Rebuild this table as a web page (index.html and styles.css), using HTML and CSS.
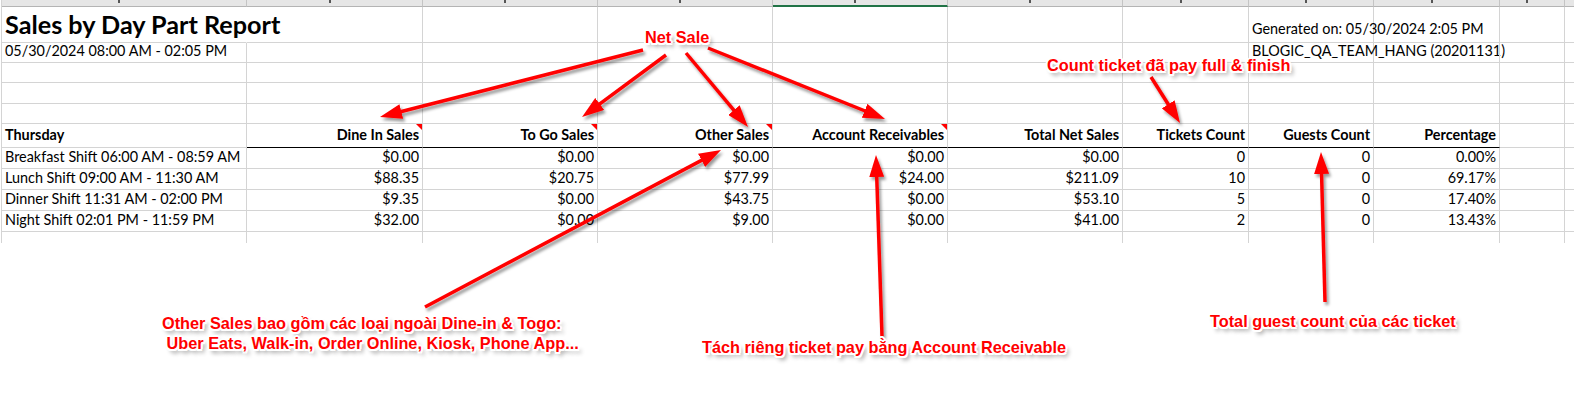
FILE: index.html
```html
<!DOCTYPE html>
<html lang="vi">
<head>
<meta charset="utf-8">
<title>Sales by Day Part Report</title>
<link rel="stylesheet" href="styles.css">
</head>
<body>
<div class="page">
  <div class="sheet">
    <div class="hd"></div>
    <div class="hd"></div>
    <div class="hd"></div>
    <div class="hd"></div>
    <div class="hd hd-sel"></div>
    <div class="hd"></div>
    <div class="hd"></div>
    <div class="hd"></div>
    <div class="hd"></div>
    <div class="hd"></div>
    <div class="hd hd-last"></div>

    <div class="c title no-r">Sales by Day Part Report</div>
    <div class="c"></div><div class="c"></div><div class="c"></div><div class="c"></div><div class="c"></div><div class="c"></div>
    <div class="c gen">Generated on: 05/30/2024 2:05 PM</div>
    <div class="c"></div><div class="c"></div><div class="c last"></div>

    <div class="c">05/30/2024 08:00 AM - 02:05 PM</div>
    <div class="c"></div><div class="c"></div><div class="c"></div><div class="c"></div><div class="c"></div><div class="c"></div>
    <div class="c">BLOGIC_QA_TEAM_HANG (20201131)</div>
    <div class="c"></div><div class="c"></div><div class="c last"></div>

    <div class="c"></div><div class="c"></div><div class="c"></div><div class="c"></div><div class="c"></div><div class="c"></div><div class="c"></div><div class="c"></div><div class="c"></div><div class="c"></div><div class="c last"></div>
    <div class="c"></div><div class="c"></div><div class="c"></div><div class="c"></div><div class="c"></div><div class="c"></div><div class="c"></div><div class="c"></div><div class="c"></div><div class="c"></div><div class="c last"></div>
    <div class="c"></div><div class="c"></div><div class="c"></div><div class="c"></div><div class="c"></div><div class="c"></div><div class="c"></div><div class="c"></div><div class="c"></div><div class="c"></div><div class="c last"></div>

    <div class="c th day">Thursday</div>
    <div class="c th r hb note-mark">Dine In Sales</div>
    <div class="c th r hb note-mark">To Go Sales</div>
    <div class="c th r hb note-mark">Other Sales</div>
    <div class="c th r hb note-mark">Account Receivables</div>
    <div class="c th r hb">Total Net Sales</div>
    <div class="c th r hb">Tickets Count</div>
    <div class="c th r hb">Guests Count</div>
    <div class="c th r hb">Percentage</div>
    <div class="c"></div><div class="c last"></div>

    <div class="c">Breakfast Shift 06:00 AM - 08:59 AM</div>
    <div class="c r">$0.00</div><div class="c r">$0.00</div><div class="c r">$0.00</div><div class="c r">$0.00</div><div class="c r">$0.00</div>
    <div class="c r">0</div><div class="c r">0</div><div class="c r">0.00%</div>
    <div class="c"></div><div class="c last"></div>

    <div class="c">Lunch Shift 09:00 AM - 11:30 AM</div>
    <div class="c r">$88.35</div><div class="c r">$20.75</div><div class="c r">$77.99</div><div class="c r">$24.00</div><div class="c r">$211.09</div>
    <div class="c r">10</div><div class="c r">0</div><div class="c r">69.17%</div>
    <div class="c"></div><div class="c last"></div>

    <div class="c">Dinner Shift 11:31 AM - 02:00 PM</div>
    <div class="c r">$9.35</div><div class="c r">$0.00</div><div class="c r">$43.75</div><div class="c r">$0.00</div><div class="c r">$53.10</div>
    <div class="c r">5</div><div class="c r">0</div><div class="c r">17.40%</div>
    <div class="c"></div><div class="c last"></div>

    <div class="c">Night Shift 02:01 PM - 11:59 PM</div>
    <div class="c r">$32.00</div><div class="c r">$0.00</div><div class="c r">$9.00</div><div class="c r">$0.00</div><div class="c r">$41.00</div>
    <div class="c r">2</div><div class="c r">0</div><div class="c r">13.43%</div>
    <div class="c"></div><div class="c last"></div>

    <div class="c end"></div><div class="c end"></div><div class="c end"></div><div class="c end"></div><div class="c end"></div><div class="c end"></div><div class="c end"></div><div class="c end"></div><div class="c end"></div><div class="c end"></div><div class="c end last"></div>
  </div>

  <svg class="overlay" width="1574" height="396" viewBox="0 0 1574 396" aria-hidden="true">
    <defs>
      <marker id="ah" markerUnits="userSpaceOnUse" markerWidth="22" markerHeight="15" refX="10" refY="7.5" orient="auto">
        <path d="M0,0 L22,7.5 L0,15 Z" fill="#ff0000"/>
      </marker>
      <filter id="sh" filterUnits="userSpaceOnUse" x="0" y="0" width="1574" height="396">
        <feDropShadow dx="2" dy="3" stdDeviation="1.5" flood-color="#000" flood-opacity="0.4"/>
      </filter>
    </defs>
    <g filter="url(#sh)" stroke="#ff0000" stroke-width="3.5" fill="none">
      <line x1="643" y1="50" x2="391.6" y2="114" marker-end="url(#ah)"/>
      <line x1="666" y1="55" x2="591.7" y2="109.9" marker-end="url(#ah)"/>
      <line x1="686" y1="53" x2="740.3" y2="117.8" marker-end="url(#ah)"/>
      <line x1="708" y1="48" x2="873.9" y2="114.5" marker-end="url(#ah)"/>
      <line x1="1151" y1="77" x2="1173.6" y2="112.8" marker-end="url(#ah)"/>
      <line x1="425" y1="307" x2="710.4" y2="155.6" marker-end="url(#ah)"/>
      <line x1="882" y1="336" x2="876.4" y2="167" marker-end="url(#ah)"/>
      <line x1="1325" y1="302" x2="1321.3" y2="164" marker-end="url(#ah)"/>
    </g>
  </svg>

  <div class="note note-net">Net Sale</div>
  <div class="note note-count">Count ticket đã pay full &amp; finish</div>
  <div class="note note-other">Other Sales bao gồm các loại ngoài Dine-in &amp; Togo:<br>&nbsp;Uber Eats, Walk-in, Order Online, Kiosk, Phone App...</div>
  <div class="note note-ar">Tách riêng ticket pay bằng Account Receivable</div>
  <div class="note note-guest">Total guest count của các ticket</div>
</div>
</body>
</html>
```

FILE: styles.css
```css
html, body {
  margin: 0;
  padding: 0;
  background: #ffffff;
}

.page {
  position: relative;
  width: 1574px;
  height: 396px;
  overflow: hidden;
  background: #ffffff;
}

.sheet {
  display: grid;
  margin-left: 1px;
  border-left: 1px solid #d4d4d4;
  grid-template-columns: 245px 176px 175px 175px 175px 175px 126px 125px 126px 65px 1fr;
  grid-template-rows: 7px 36px 20px 20px 21px 20px 24px 21px 21px 21px 21px 11px;
  font-family: Lato, "Noto Sans", sans-serif;
  font-size: 14.4px;
  color: #000;
}

.hd {
  position: relative;
  box-sizing: border-box;
  background: #e6e6e6;
  border-right: 1px solid #c4c4c4;
  border-bottom: 1px solid #b4b4b4;
}
.hd::after {
  content: "";
  position: absolute;
  top: 0;
  left: 50%;
  width: 2px;
  height: 3px;
  margin-left: -6px;
  background: #555;
}
.hd-sel {
  border-bottom: 2px solid #217346;
}
.hd-last {
  border-right: 0;
}
.hd-last::after {
  display: none;
}

.c {
  position: relative;
  box-sizing: border-box;
  border-right: 1px solid #d4d4d4;
  border-bottom: 1px solid #d4d4d4;
  display: flex;
  align-items: flex-end;
  padding: 0 3px 2px 3px;
  line-height: 18px;
  white-space: nowrap;
  min-width: 0;
}
.c.last { border-right: 0; }
.c.no-r { border-right-color: transparent; }
.c.end { border-bottom: 0; }
.c.r { justify-content: flex-end; }

.title {
  font-size: 25.2px;
  font-weight: 700;
  line-height: 30px;
  padding-bottom: 3px;
  padding-left: 3px;
  z-index: 1;
}
.gen {
  padding-bottom: 4px;
}

.th {
  font-weight: 700;
  padding-bottom: 3px;
}
.hb {
  border-bottom-color: #000;
}

.note-mark::after {
  content: "";
  position: absolute;
  top: 0;
  right: 0;
  width: 0;
  height: 0;
  border-top: 6px solid #ff0000;
  border-left: 6px solid transparent;
}

.overlay {
  position: absolute;
  left: 0;
  top: 0;
  pointer-events: none;
}

.note {
  position: absolute;
  font-family: "Liberation Sans", Arial, sans-serif;
  font-weight: 700;
  font-size: 16.3px;
  line-height: 20px;
  color: #ff0000;
  white-space: nowrap;
  text-shadow:
    -2px 0 0 #fff, 2px 0 0 #fff, 0 -2px 0 #fff, 0 2px 0 #fff,
    -1.5px -1.5px 0 #fff, 1.5px 1.5px 0 #fff, -1.5px 1.5px 0 #fff, 1.5px -1.5px 0 #fff,
    3px 4px 4px rgba(0, 0, 0, 0.45);
}
.note-net { left: 645px; top: 27px; }
.note-count { left: 1047px; top: 55px; }
.note-other { left: 162px; top: 313px; }
.note-ar { left: 702px; top: 337px; }
.note-guest { left: 1210px; top: 311px; }
```
